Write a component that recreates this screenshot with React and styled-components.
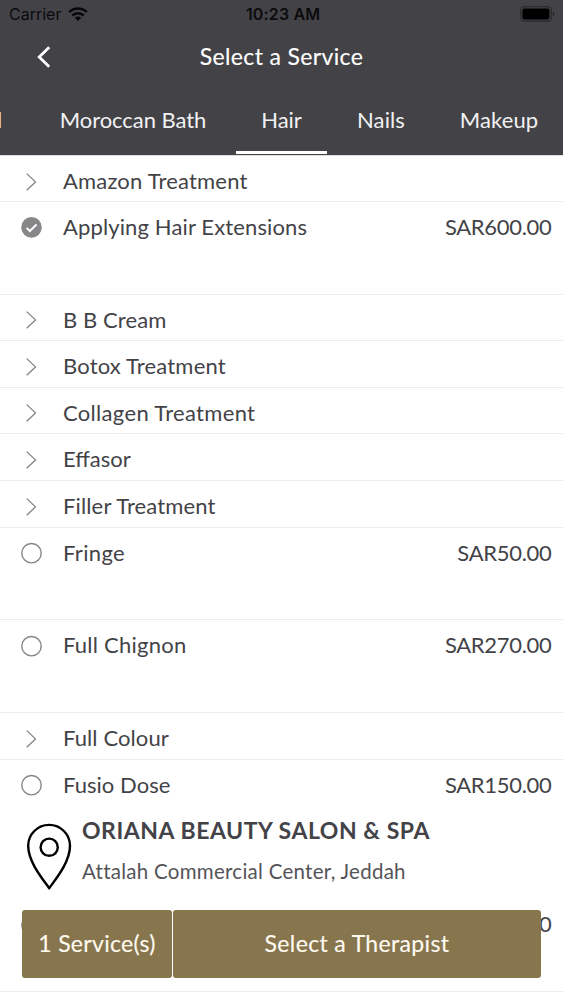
import React from "react";
import styled, { createGlobalStyle } from "styled-components";

const GlobalStyle = createGlobalStyle`
  * { box-sizing: border-box; }
  body { margin: 0; background: #fff; font-family: Lato, "Liberation Sans", sans-serif; color: #434347; }
`;

const Screen = styled.main`
  position: relative;
  height: 1000px;
  overflow: hidden;
  background: #fff;
`;

const Header = styled.header`
  height: 155px;
  background: #434246;
  color: #fff;
  display: flex;
  flex-direction: column;
`;

const StatusBar = styled.div`
  height: 29px;
  padding: 0 8px 0 9px;
  display: grid;
  grid-template-columns: 1fr auto 1fr;
  align-items: center;
  font: 400 16px/29px Inter, sans-serif;
  color: #0b0b0d;
`;

const Carrier = styled.div`
  display: flex;
  align-items: center;
  gap: 7px;
  letter-spacing: ${(p) => p.$track}px;
`;

const Clock = styled.div`
  padding-left: 2px;
  font-weight: 600;
  letter-spacing: ${(p) => p.$track}px;
`;

const BatterySlot = styled.div`
  display: flex;
  justify-content: flex-end;
  padding-bottom: 2px;
`;

const NavBar = styled.div`
  height: 56px;
  display: grid;
  grid-template-columns: 88px 1fr 88px;
  align-items: center;
`;

const BackButton = styled.button`
  border: 0;
  padding: 0 0 0 36px;
  background: none;
  color: inherit;
  display: flex;
`;

const Title = styled.h1`
  margin: 0;
  padding-bottom: 2px;
  text-align: center;
  font-size: 23px;
  font-weight: 400;
  letter-spacing: ${(p) => p.$track}px;
  -webkit-text-stroke: 0.15px currentColor;
`;

const Tabs = styled.nav`
  flex: 1;
  display: flex;
  align-items: stretch;
`;

const Tab = styled.div`
  flex: none;
  width: ${(p) => p.$width}px;
  height: 69px;
  text-align: ${(p) => (p.$clipped ? "left" : "center")};
  text-indent: ${(p) => (p.$clipped ? -3 : 0)}px;
  font-size: 22px;
  line-height: 70px;
  letter-spacing: ${(p) => p.$track || 0}px;
  white-space: nowrap;
  overflow: hidden;
  color: #f1f1f3;
  border-bottom: 3px solid ${(p) => (p.$active ? "#fff" : "transparent")};
`;

const List = styled.ul`
  list-style: none;
  margin: 0;
  padding: 0;
  border-top: 1px solid #dfdfe1;
`;

const Row = styled.li`
  height: ${(p) => (p.$tall ? 92.9 : 46.55)}px;
  padding: 0 11px 0 20px;
  display: flex;
  align-items: flex-start;
  border-bottom: 1px solid #ececee;
  font-size: 22px;
  line-height: 49px;
  white-space: nowrap;

  &:first-child {
    height: 45.95px;
  }
`;

const Marker = styled.span`
  flex: none;
  width: 43px;
  height: 51px;
  display: flex;
  align-items: center;
`;

const Name = styled.span`
  flex: 1;
  letter-spacing: ${(p) => (p.$track ? `${p.$track}px` : "normal")};
`;

const Price = styled.span`
  letter-spacing: ${(p) => p.$track}px;
  margin-right: 0.5px;
`;

const Footer = styled.footer`
  position: absolute;
  left: 0;
  right: 0;
  bottom: 22px;
`;

const Venue = styled.section`
  height: 104px;
  padding: 0 0 0 26px;
  display: flex;
  gap: 10px;
  background: #fff;
`;

const PinSlot = styled.div`
  width: 46px;
  padding-top: 17px;
`;

const VenueName = styled.h2`
  margin: 7px 0 0;
  font-size: 23px;
  line-height: 34px;
  font-weight: 700;
  letter-spacing: ${(p) => p.$track}px;
  white-space: nowrap;
`;

const VenueAddress = styled.p`
  margin: 8px 0 0;
  font-size: 20.5px;
  line-height: 32px;
  color: #545458;
  letter-spacing: ${(p) => p.$track}px;
  white-space: nowrap;
`;

const Actions = styled.div`
  padding: 0 22px;
  display: flex;
  gap: 1px;
`;

const Action = styled.button`
  flex: ${(p) => (p.$width ? `0 0 ${p.$width}px` : "1")};
  height: 68px;
  padding: 0 0 2px;
  border: 0;
  border-radius: 3px;
  background: #86754d;
  color: #fffaf0;
  font: 400 23px/66px Lato, sans-serif;
  letter-spacing: ${(p) => p.$track}px;
  -webkit-text-stroke: 0.15px currentColor;
  white-space: nowrap;
`;

const Wifi = () => (
  <svg width="20" height="15" viewBox="0 0 20 15" fill="none" stroke="#08080a" strokeWidth="2.5">
    <path d="M1.2 5.2a12.6 12.6 0 0 1 17.6 0" />
    <path d="M4.3 8.5a8.2 8.2 0 0 1 11.4 0" />
    <path d="M10 14 6.8 10.8a4.6 4.6 0 0 1 6.4 0Z" fill="#08080a" stroke="none" />
  </svg>
);

const Battery = () => (
  <svg width="35" height="16" viewBox="0 0 35 16">
    <rect x="0.7" y="0.7" width="30.6" height="14.4" rx="3.6" fill="none" stroke="#28272a" strokeWidth="1.1" />
    <rect x="2.4" y="2.4" width="27" height="11" rx="1.8" fill="#000" />
    <path d="M32.8 5.6q1.5.8 1.5 2.4t-1.5 2.4Z" fill="#28272a" />
  </svg>
);

const Chevron = () => (
  <svg width="23" height="22" viewBox="0 0 23 22" fill="none" stroke="#828286" strokeWidth="1.3">
    <path d="M6.7 2.6 15.5 10.9 6.7 19.2" />
  </svg>
);

const Radio = () => (
  <svg width="23" height="22" viewBox="0 0 23 22" fill="none" stroke="#858588" strokeWidth="1.4">
    <circle cx="11.5" cy="11.2" r="9.7" />
  </svg>
);

const Checked = () => (
  <svg width="23" height="22" viewBox="0 0 23 22" fill="none">
    <circle cx="11.5" cy="11.4" r="10.3" fill="#878789" />
    <path d="m6.6 11.9 3.2 3.1 6.8-6.5" stroke="#fff" strokeWidth="2" />
  </svg>
);

const Pin = () => (
  <svg width="46" height="68" viewBox="0 0 46 68" fill="none" stroke="#000" strokeWidth="2.4">
    <path d="M23.2 65.2C15.5 54.5 2.2 38.5 2.2 22.8a20.8 20.8 0 0 1 41.8 0C44 38.5 31 54.5 23.2 65.2Z" strokeLinejoin="round" />
    <circle cx="23.2" cy="24.2" r="8.6" />
  </svg>
);

const services = [
  { name: "Amazon Treatment", track: 0.19 },
  { name: "Applying Hair Extensions", track: 0.13, price: "SAR600.00", checked: true },
  { name: "B B Cream", track: 0.1 },
  { name: "Botox Treatment", track: 0.17 },
  { name: "Collagen Treatment", track: 0.32 },
  { name: "Effasor", track: 0 },
  { name: "Filler Treatment", track: 0.14 },
  { name: "Fringe", track: 0.35, price: "SAR50.00" },
  { name: "Full Chignon", track: 0.24, price: "SAR270.00" },
  { name: "Full Colour", track: 0.1 },
  { name: "Fusio Dose", track: 0.04, price: "SAR150.00" },
  { name: "", track: 0 },
  { name: "", track: 0, price: "0" },
];

export default function App() {
  return (
    <Screen>
      <GlobalStyle />
      <Header>
        <StatusBar>
          <Carrier $track={0}>Carrier<Wifi /></Carrier>
          <Clock $track={0.15}>10:23 AM</Clock>
          <BatterySlot><Battery /></BatterySlot>
        </StatusBar>
        <NavBar>
          <BackButton aria-label="Back">
            <svg width="15" height="24" viewBox="0 0 15 24" fill="none" stroke="#fff" strokeWidth="2.8">
              <path d="M13.2 2.2 3.2 12l10 9.8" />
            </svg>
          </BackButton>
          <Title $track={0.35}>Select a Service</Title>
        </NavBar>
        <Tabs>
          <Tab $width={30} $clipped>l</Tab>
          <Tab $width={206} $track={-0.05}>Moroccan Bath</Tab>
          <Tab $width={91} $track={-0.1} $active>Hair</Tab>
          <Tab $width={108} $track={0.1}>Nails</Tab>
          <Tab $width={128} $track={0.1}>Makeup</Tab>
        </Tabs>
      </Header>
      <List>
        {services.map((s, i) => (
          <Row key={i} $tall={!!s.price}>
            <Marker>{s.checked ? <Checked /> : s.price ? <Radio /> : <Chevron />}</Marker>
            <Name $track={s.track}>{s.name}</Name>
            {s.price && <Price $track={-0.3}>{s.price}</Price>}
          </Row>
        ))}
      </List>
      <Footer>
        <Venue>
          <PinSlot><Pin /></PinSlot>
          <div>
            <VenueName $track={0.54}>ORIANA BEAUTY SALON &amp; SPA</VenueName>
            <VenueAddress $track={0.27}>Attalah Commercial Center, Jeddah</VenueAddress>
          </div>
        </Venue>
        <Actions>
          <Action $width={150} $track={0.3}>1 Service(s)</Action>
          <Action $track={0.35}>Select a Therapist</Action>
        </Actions>
      </Footer>
    </Screen>
  );
}
